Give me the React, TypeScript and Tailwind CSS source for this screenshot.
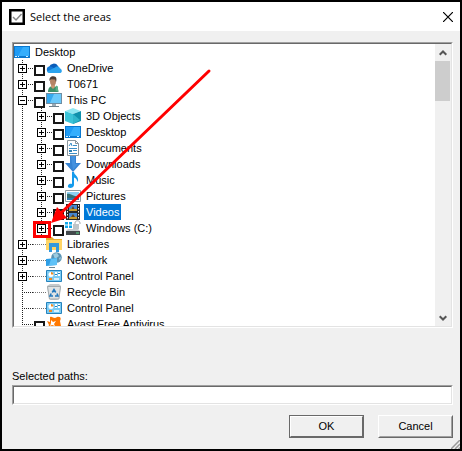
import { useState, type ReactNode } from "react";
import clsx from "clsx";

type Item = {
  id: string;
  label: string;
  icon: ReactNode;
  level: number;
  expander?: "plus" | "minus";
  checkbox?: boolean;
};

function Icon({ children }: { children: ReactNode }) {
  return (
    <svg viewBox="0 0 16 16" className="size-4 shrink-0" aria-hidden="true">
      {children}
    </svg>
  );
}

const desktopIcon = (
  <Icon>
    <path d="M0 2h16v12H0z" fill="#0a78cf" />
    <path d="M1 3h14v9H1z" fill="#1e9bf5" />
    <path d="M9 3h6v9H4z" fill="#35aefc" />
    <path d="M1 12.500h2M4 12.500h1M12 12.500h2" stroke="#d5efff" />
  </Icon>
);

const oneDriveIcon = (
  <Icon>
    <path d="M3 7a5 5 0 0 1 9-1l1 3-8 3z" fill="#0a5cb8" />
    <path d="M4 13a3.300 3.300 0 0 1-1-6.400c2-.6 3 .2 4 1l4 3-2 2.400z" fill="#1279d6" />
    <path d="M9 7.500c1-1.600 4.500-1.600 5 1 2.500.7 2.600 4.500-.6 4.500H4c-1 0-2.500-.4-3-1.500z" fill="#2ba3ee" />
  </Icon>
);

const userIcon = (
  <Icon>
    <path d="M2 16c0-4 2-6 5-6s5.500 2 5.500 6z" fill="#3d9069" />
    <path d="M5 9h4v2l-2 2-2-2z" fill="#c99873" />
    <ellipse cx="7" cy="5.500" rx="3" ry="4" fill="#b58465" />
    <path d="M3.500 5C3 1.500 5 0 7.500.2 10.500.3 11 3 10 6L9 3.500 5 3.200z" fill="#4c3c34" />
    <path d="M10 9.500l2 1v5l-2.500-1z" fill="#5bb087" />
  </Icon>
);

const pcIcon = (
  <Icon>
    <path d="M0 1h16v11H0z" fill="#6f8ea3" />
    <path d="M1 2h14v9H1z" fill="#35a9ee" />
    <path d="M8 2h7v9H4z" fill="#6bc9fa" />
    <path d="M6 12h4v2H6z" fill="#9cabb5" />
    <path d="M3 14h10v1H3z" fill="#6d7f8b" />
  </Icon>
);

const cubeIcon = (
  <Icon>
    <path d="M8 0l7.500 3L8 6 .5 3z" fill="#8fe7f2" />
    <path d="M0 3l8 3v10l-8-3z" fill="#3cc4d8" />
    <path d="M16 3L8 6v10l8-3z" fill="#0f91ac" />
    <path d="M8 6l7 6-7 4z" fill="#2fb6cb" />
  </Icon>
);

const documentIcon = (
  <Icon>
    <path d="M2.500.5h8l3 3v12h-11z" fill="#fff" stroke="#8b969d" />
    <path d="M10.500.5v3h3" fill="none" stroke="#8b969d" />
    <path d="M4 6l2-3 1 3M8 5.500h4M4 8.500h8M8 10.500h4M4 13.500h8" fill="none" stroke="#3c8fc7" />
    <path d="M4 10h3v2H4z" fill="#2f7eaf" />
  </Icon>
);

const downloadIcon = (
  <Icon>
    <path d="M5 0h6v7h5l-8 9-8-9h5z" fill="#3683d2" />
    <path d="M6 0h4v8h3l-5 6z" fill="#4492df" />
  </Icon>
);

const musicIcon = (
  <Icon>
    <path d="M7 0h2c.3 3.500 5 4 4 9.500-.7 1-.5-3-4-4V13c0 2-2 3-3.800 3S2.500 15 3 13.500 5.500 11.300 7 12z" fill="#159bec" />
  </Icon>
);

const pictureIcon = (
  <Icon>
    <path d="M.5 2.500h15v11H.5z" fill="#fff" stroke="#8d999f" />
    <path d="M2 4h12v8H2z" fill="#8fd0f3" />
    <path d="M2 6c3-1 5 2 12 3v3H2z" fill="#357073" />
    <path d="M2 10h12v2H2z" fill="#2e7bb0" />
  </Icon>
);

const videoIcon = (
  <Icon>
    <path d="M1 0h14v16H1z" fill="#262626" />
    <path d="M4 1h8v6H4zM4 9h8v6H4z" fill="#4587d0" />
    <path d="M4 6l3-2 2 1h3v2H4zM4 14l3-2 5 1v2H4z" fill="#c79a2d" />
    <path d="M8 2l1.500 3H6.500zM8 10l2 3H6z" fill="#5d4526" />
    <path d="M2.500 1v15M13.500 1v15" stroke="#eee" strokeDasharray="1.500 1.500" />
  </Icon>
);

const driveIcon = (
  <Icon>
    <path d="M0 2h3v2.500H0zM4 2h3v2.500H4zM0 5.500h3V8H0zM4 5.500h3V8H4z" fill="#13a9ea" />
    <path d="M10 5V3c0-3 5-3 5 0v1" fill="none" stroke="#a3a9ac" />
    <path d="M8 4h6v5H8z" fill="#bfc5c8" />
    <path d="M3 9h10l2 2H1z" fill="#c6cbce" />
    <path d="M1 11h14v4H1z" fill="#43494c" />
    <path d="M11 13h3" stroke="#5de38c" />
  </Icon>
);

const librariesIcon = (
  <Icon>
    <path d="M0 1h6l2 2h8v10H0z" fill="#e8ac2c" />
    <path d="M0 4h16v10H0z" fill="#ffd566" />
    <path d="M3 7h10v9h-3v-5H6v5H3z" fill="#3298dd" />
  </Icon>
);

const networkIcon = (
  <Icon>
    <circle cx="10.500" cy="5.500" r="5.300" fill="#5b93b3" />
    <path d="M7 2l4-1 2 3-4 3zM13 6l2-1-1 4z" fill="#9ccbe0" />
    <path d="M0 7l11-1v7l-11 1z" fill="#2e9ee6" />
    <path d="M5 7l6-1v7l-8 .5z" fill="#5fc2f7" />
    <path d="M3 15.500h6" stroke="#6b8493" />
  </Icon>
);

const controlPanelIcon = (
  <Icon>
    <path d="M.5 2.500h15v11H.5z" fill="#7ccbf3" stroke="#2583bd" />
    <circle cx="5" cy="6.500" r="2.500" fill="#fff" />
    <path d="M5 4v2.500h2.500A2.500 2.500 0 0 0 5 4z" fill="#f08b22" />
    <path d="M9 4h2v4H9zM12 4h2v4h-2z" fill="#fff" />
    <path d="M9 6.500h2M12 5.500h2" stroke="#2583bd" />
    <path d="M3 11h3" stroke="#f08b22" strokeWidth="2" />
    <path d="M8 11h5" stroke="#d9f1fd" strokeWidth="2" />
  </Icon>
);

const recycleIcon = (
  <Icon>
    <path d="M1 2l3-2h9l2 2-2 13-2 1H5l-2-1z" fill="#c3c9cc" />
    <path d="M1.500 2.500h13l-1.600 12.500H3.500z" fill="#dfe3e4" stroke="#a3aaad" />
    <path d="M6.300 8.500l1.700-3 1.700 3M11 9.500l1 2.500H9M7 12H4l1.200-2.500" fill="none" stroke="#2379bd" strokeWidth="1.600" />
  </Icon>
);

const avastIcon = (
  <Icon>
    <path d="M4 1c2-1 3 1 5 1 1 0 2-2 4-1 2 0 2 2 1 4l1 5-2 6-4-4-5 4-3-2 2-5-2-4 3 1z" fill="#ff7800" />
    <path d="M5 4l2 2 3-1-2 3 1 2-3-1-2 1 1-3z" fill="#fff" />
  </Icon>
);

const ITEMS: Item[] = [
  { id: "desktop-root", label: "Desktop", icon: desktopIcon, level: 0 },
  { id: "onedrive", label: "OneDrive", icon: oneDriveIcon, level: 1, expander: "plus", checkbox: true },
  { id: "user", label: "T0671", icon: userIcon, level: 1, expander: "plus", checkbox: true },
  { id: "pc", label: "This PC", icon: pcIcon, level: 1, expander: "minus", checkbox: true },
  { id: "objects", label: "3D Objects", icon: cubeIcon, level: 2, expander: "plus", checkbox: true },
  { id: "desktop", label: "Desktop", icon: desktopIcon, level: 2, expander: "plus", checkbox: true },
  { id: "documents", label: "Documents", icon: documentIcon, level: 2, expander: "plus", checkbox: true },
  { id: "downloads", label: "Downloads", icon: downloadIcon, level: 2, expander: "plus", checkbox: true },
  { id: "music", label: "Music", icon: musicIcon, level: 2, expander: "plus", checkbox: true },
  { id: "pictures", label: "Pictures", icon: pictureIcon, level: 2, expander: "plus", checkbox: true },
  { id: "videos", label: "Videos", icon: videoIcon, level: 2, expander: "plus", checkbox: true },
  { id: "windows", label: "Windows (C:)", icon: driveIcon, level: 2, expander: "plus", checkbox: true },
  { id: "libraries", label: "Libraries", icon: librariesIcon, level: 1, expander: "plus" },
  { id: "network", label: "Network", icon: networkIcon, level: 1, expander: "plus" },
  { id: "control", label: "Control Panel", icon: controlPanelIcon, level: 1, expander: "plus" },
  { id: "recycle", label: "Recycle Bin", icon: recycleIcon, level: 1 },
  { id: "control-2", label: "Control Panel", icon: controlPanelIcon, level: 1 },
  { id: "avast", label: "Avast Free Antivirus", icon: avastIcon, level: 1, checkbox: true },
];

function Guide({ branch, expander }: { branch?: boolean; expander?: Item["expander"] }) {
  return (
    <svg viewBox="0 0 19 16" className="h-4 w-[19px]" shapeRendering="crispEdges" aria-hidden="true">
      <path d="M8.500 0v16" stroke="#222" strokeDasharray="1 1" />
      {branch && <path d="M8 8.500h11" stroke="#222" strokeDasharray="1 1" />}
      {expander && (
        <>
          <path d="M4.500 4.500h8v8h-8z" fill="#fff" stroke="#000" />
          <path d={expander === "plus" ? "M6 8.500h5M8.500 6v5" : "M6 8.500h5"} stroke="#000" />
        </>
      )}
    </svg>
  );
}

function TreeRow({
  item,
  selected,
  onSelect,
}: {
  item: Item;
  selected: boolean;
  onSelect: () => void;
}) {
  return (
    <li className="flex h-4 items-center">
      {item.level === 2 && <Guide />}
      {item.level > 0 &&
        (item.expander ? (
          <button type="button" aria-label={`Toggle ${item.label}`} className="shrink-0">
            <Guide branch expander={item.expander} />
          </button>
        ) : (
          <Guide branch />
        ))}
      {item.level > 0 &&
        (item.checkbox ? (
          <input
            type="checkbox"
            aria-label={item.label}
            className="mx-px size-[11px] shrink-0 appearance-none self-end border-2 border-neutral-900 bg-white checked:bg-neutral-500"
          />
        ) : (
          <span className="mt-px h-px w-[13px] shrink-0 border-t border-dotted border-neutral-500" />
        ))}
      {item.icon}
      <button
        type="button"
        onClick={onSelect}
        className={clsx(
          "ml-[3px] h-4 px-0.5 leading-4 whitespace-nowrap",
          selected && "bg-[#0078d7] text-white",
        )}
      >
        {item.label}
      </button>
    </li>
  );
}

function ScrollBar() {
  return (
    <div className="flex w-4 shrink-0 flex-col bg-[#f0f0f0]">
      <button type="button" aria-label="Scroll up" className="flex h-[17px] shrink-0 items-center justify-center">
        <svg viewBox="0 0 8 6" className="h-1.5 w-2" aria-hidden="true">
          <path d="M.7 4.800L4 1.500l3.300 3.300" fill="none" stroke="#555" strokeWidth="2" />
        </svg>
      </button>
      <div className="mr-px h-10 bg-[#cdcdcd]" />
      <button type="button" aria-label="Scroll down" className="mt-auto flex h-[17px] shrink-0 items-center justify-center">
        <svg viewBox="0 0 8 6" className="h-1.5 w-2" aria-hidden="true">
          <path d="M.7 1.200L4 4.500l3.300-3.300" fill="none" stroke="#555" strokeWidth="2" />
        </svg>
      </button>
    </div>
  );
}

export default function App() {
  const [selected, setSelected] = useState("videos");
  const [paths, setPaths] = useState("");

  return (
    <div className="relative flex h-screen flex-col border-2 border-black bg-[#f0f0f0] font-['Liberation_Sans',sans-serif] text-[11px] text-black">
      <header className="flex h-[29px] shrink-0 items-center bg-white pr-[7px] pl-[7px]">
        <svg viewBox="0 0 16 16" className="size-4" aria-hidden="true">
          <path d="M1.250 1.250h13.500v13.500H1.250z" fill="#fff" stroke="#000" strokeWidth="2.500" />
          <path d="M4 8l3 3 5.500-6" fill="none" stroke="#888" strokeWidth="1.500" />
        </svg>
        <h1 className="ml-[5px] font-['Open_Sans',sans-serif] text-[11px] leading-4">Select the areas</h1>
        <button type="button" aria-label="Close" className="ml-auto">
          <svg viewBox="0 0 10 10" className="size-2.5" aria-hidden="true">
            <path d="M0 0l10 10M10 0L0 10" stroke="#000" strokeWidth="1.200" />
          </svg>
        </button>
      </header>

      <main className="flex min-h-0 flex-1 flex-col pt-[11px] pr-[7px] pb-[11px] pl-2.5">
        <div className="min-h-0 flex-1 border border-t-[#a0a0a0] border-r-white border-b-white border-l-[#a0a0a0]">
          <div className="flex h-full border border-t-[#696969] border-r-[#e3e3e3] border-b-[#e3e3e3] border-l-[#696969] bg-white">
            <ul className="min-w-0 flex-1 overflow-hidden">
              {ITEMS.map((item) => (
                <TreeRow
                  key={item.id}
                  item={item}
                  selected={item.id === selected}
                  onSelect={() => setSelected(item.id)}
                />
              ))}
            </ul>
            <ScrollBar />
          </div>
        </div>

        <label htmlFor="paths" className="mt-10 h-[17px] leading-4">
          Selected paths:
        </label>
        <div className="border border-t-[#a0a0a0] border-r-white border-b-white border-l-[#a0a0a0]">
          <input
            id="paths"
            type="text"
            value={paths}
            onChange={(e) => setPaths(e.target.value)}
            className="block h-[18px] w-full border border-t-[#696969] border-r-[#e3e3e3] border-b-[#e3e3e3] border-l-[#696969] bg-white px-1 outline-none"
          />
        </div>

        <div className="mt-2.5 flex justify-end gap-3.5">
          <button type="button" className="h-[23px] w-[75px] border border-[#696969]">
            <span className="flex h-full items-center justify-center border border-t-white border-r-[#696969] border-b-[#696969] border-l-white">
              OK
            </span>
          </button>
          <button
            type="button"
            className="h-[23px] w-[75px] border border-t-white border-r-[#696969] border-b-[#696969] border-l-white"
          >
            <span className="flex h-full items-center justify-center border border-t-[#f0f0f0] border-r-[#a0a0a0] border-b-[#a0a0a0] border-l-[#f0f0f0]">
              Cancel
            </span>
          </button>
        </div>
      </main>

      {/* Resize grip */}
      <svg viewBox="0 0 9 9" className="absolute right-0 bottom-0 size-[9px]" aria-hidden="true">
        <path d="M0 9l9-9M4 9l5-5M7.500 9L9 7.500" stroke="#999" strokeWidth="1.500" />
      </svg>

      {/* Callout pointing at the drive's expander */}
      <svg viewBox="0 0 190 175" className="pointer-events-none absolute top-[66px] left-[28px] h-[175px] w-[190px]" aria-hidden="true">
        <path d="M179 3L32 144" stroke="#f00" strokeWidth="3" strokeLinecap="round" />
        <path d="M21 155l6-16 10 11z" fill="#f00" />
        <path d="M4.500 154.500h15v14h-15z" fill="none" stroke="#f00" strokeWidth="3" />
      </svg>
    </div>
  );
}
